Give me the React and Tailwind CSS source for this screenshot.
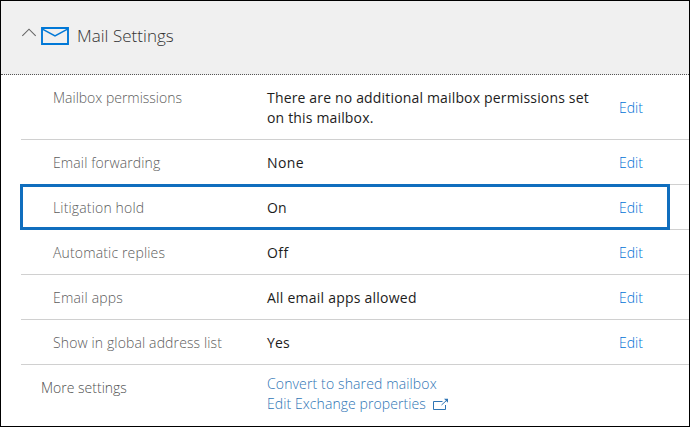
const rows = [
  {
    label: 'Mailbox permissions',
    labelClass: 'tracking-[-0.01px]',
    value: (
      <>
        There are no additional mailbox permissions set
        <br />
        on this mailbox.
      </>
    ),
    valueClass: 'tracking-[0.165px]',
    tall: true,
  },
  { label: 'Email forwarding', labelClass: 'tracking-[0.12px]', value: 'None', valueClass: 'tracking-[0.4px]' },
  { label: 'Litigation hold', labelClass: 'tracking-[0.16px]', value: 'On', valueClass: 'tracking-[0.2px]', highlighted: true },
  { label: 'Automatic replies', labelClass: 'tracking-[0.15px]', value: 'Off', valueClass: 'tracking-[0.4px]' },
  { label: 'Email apps', labelClass: 'tracking-[0.2px]', value: 'All email apps allowed', valueClass: 'tracking-[0.23px]' },
  { label: 'Show in global address list', labelClass: 'tracking-[0.13px]', value: 'Yes', valueClass: 'tracking-[0.1px]' },
];

function Row({ label, labelClass, value, valueClass, tall, highlighted }) {
  return (
    <div
      className={`relative ml-5 flex border-b border-[#d0d0d0] pt-[13px] pl-8 ${tall ? 'h-[65px]' : 'h-[45px]'}`}
    >
      <div className={`w-[214px] shrink-0 font-light text-[#5c5c5c] ${labelClass}`}>{label}</div>
      <div className={`w-[352px] shrink-0 text-[#1c1c1c] ${valueClass}`}>{value}</div>
      <a className={`font-light text-[#0072d6] ${tall ? 'pt-2.5' : ''}`}>Edit</a>
      {highlighted && (
        <div className="absolute -top-px -left-px z-10 h-[46px] w-[650px] border-3 border-[#106ebe]" />
      )}
    </div>
  );
}

export default function App() {
  return (
    <div className="h-[427px] w-[690px] overflow-hidden border border-black bg-white font-['Open_Sans','Noto_Sans',sans-serif] text-[14px] leading-5 whitespace-nowrap">
      <header className="flex h-[74px] border-b border-dotted border-[#555] bg-[#f0f0f0] pl-5">
        <svg className="mt-[27px] h-2.5 w-4" viewBox="0 0 16 10" fill="none" stroke="#666" strokeWidth="1.1">
          <path d="M1.3 7.8 8 1.2l6.7 6.6" />
        </svg>
        <svg className="mt-[26px] ml-1 h-[18px] w-7" viewBox="0 0 28 18" fill="none" stroke="#0078d7">
          <path d="M1 1h26v16H1z" strokeWidth="1.9" />
          <path d="M1 1.9l13 7 13-7" strokeWidth="1.5" />
        </svg>
        <h1 className="mt-[23px] ml-2 text-[17px] leading-6 font-light tracking-[0.03px] text-[#333]">Mail Settings</h1>
      </header>
      {rows.map((row) => (
        <Row key={row.label} {...row} />
      ))}
      <div className="flex pt-[9px] pl-10">
        <div className="w-[226px] shrink-0 pt-1 font-light text-[#505050]">More settings</div>
        <div className="font-light text-[#2f75b5]">
          <div className="tracking-[0.13px]">Convert to shared mailbox</div>
          <div className="flex tracking-[0.08px]">
            Edit Exchange properties
            <svg className="mt-1 ml-[7px] h-[13px] w-4" viewBox="0 0 16 13" fill="none" stroke="#2f75b5">
              <path d="M9.5 3.5h-9v8h12V7M8.5 7l5.5-5" />
              <path d="M11 .8h4v4z" fill="#2f75b5" stroke="none" />
            </svg>
          </div>
        </div>
      </div>
    </div>
  );
}
